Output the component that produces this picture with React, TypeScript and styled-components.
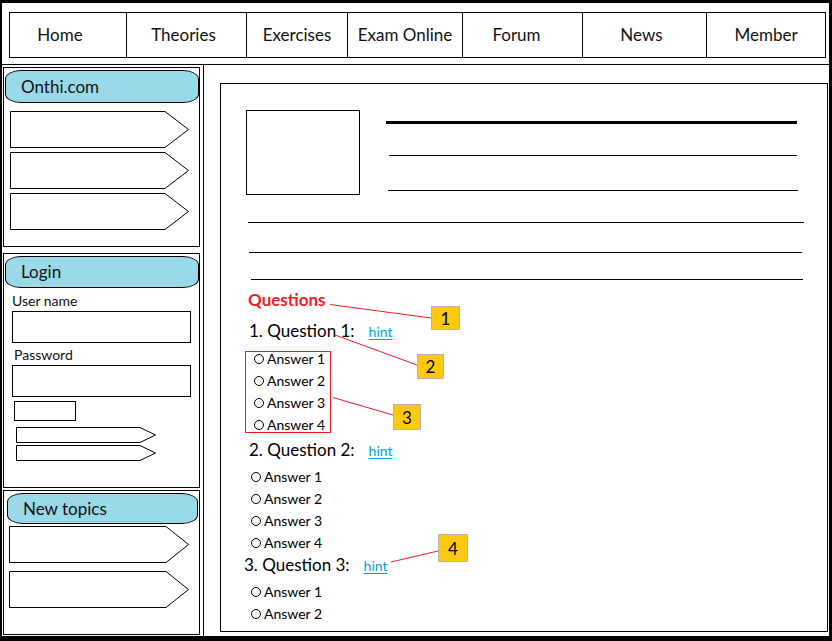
import React from "react";
import styled, { createGlobalStyle } from "styled-components";

const GlobalStyle = createGlobalStyle`
  * {
    box-sizing: border-box;
  }
  body {
    margin: 0;
    background: #fff;
    font-family: Lato, "Open Sans", sans-serif;
    color: #111;
  }
`;

const Frame = styled.div`
  position: relative;
  width: 832px;
  height: 641px;
  display: flex;
  flex-direction: column;
  background: #fff;
  border-style: solid;
  border-color: #000;
  border-width: 3px 3px 5px 2px;
`;

const Header = styled.header`
  height: 62px;
  padding: 9px 0 0 7px;
  border-bottom: 1px solid #000;
`;

const Nav = styled.nav`
  display: grid;
  grid-template-columns: 116px 120px 101px 115px 120px 124px 119px;
  width: 817px;
  height: 46px;
  border: 1px solid #000;
`;

const NavItem = styled.div<{ $offset?: number }>`
  display: flex;
  align-items: center;
  justify-content: center;
  padding-right: ${(p) => p.$offset || 0}px;
  padding-bottom: 2px;
  font-size: 17px;
  color: #111;
  & + & {
    border-left: 1px solid #000;
  }
`;

const Body = styled.div`
  flex: 1;
  min-height: 0;
  display: grid;
  grid-template-columns: 202px 1fr;
`;

const Sidebar = styled.aside`
  display: flex;
  flex-direction: column;
  padding: 2px 0 0 1px;
  border-right: 1px solid #000;
`;

const Panel = styled.section<{ $h: number; $mt?: number }>`
  display: flex;
  flex-direction: column;
  align-items: flex-start;
  width: 197px;
  height: ${(p) => p.$h}px;
  margin-top: ${(p) => p.$mt || 0}px;
  border: 1px solid #000;
`;

const Pill = styled.div<{ $w: number; $h: number; $ml?: number }>`
  width: ${(p) => p.$w}px;
  height: ${(p) => p.$h}px;
  margin: 2px 0 0 ${(p) => p.$ml || 0}px;
  padding-left: 15px;
  line-height: ${(p) => p.$h - 2}px;
  font-size: 17px;
  color: #111;
  background: #99d9ea;
  border: 1px solid #000;
  border-radius: 16px / 9px;
`;

const ArrowStack = styled.div<{ $mt: number; $ml: number; $gap: number }>`
  display: flex;
  flex-direction: column;
  gap: ${(p) => p.$gap}px;
  margin: ${(p) => p.$mt}px 0 0 ${(p) => p.$ml}px;
`;

const ArrowSvg = styled.svg`
  display: block;
`;

const Label = styled.label<{ $ml: number; $mt: number }>`
  display: block;
  margin: ${(p) => p.$mt}px 0 0 ${(p) => p.$ml}px;
  font-size: 14px;
  line-height: 16px;
  color: #111;
`;

const Field = styled.input<{ $w: number; $h: number; $ml: number; $mt: number }>`
  display: block;
  width: ${(p) => p.$w}px;
  height: ${(p) => p.$h}px;
  margin: ${(p) => p.$mt}px 0 0 ${(p) => p.$ml}px;
  padding: 0;
  border: 1px solid #000;
  border-radius: 0;
  background: #fff;
  outline: none;
  appearance: none;
`;

const Main = styled.main`
  display: flex;
  padding: 18px 1px 4px 16px;
`;

const ContentBox = styled.div`
  flex: 1;
  display: flex;
  flex-direction: column;
  border: 1px solid #000;
`;

const TopRow = styled.div`
  display: flex;
  margin: 26px 0 0 25px;
`;

const Thumb = styled.div`
  width: 114px;
  height: 85px;
  border: 1px solid #000;
`;

const HeadLines = styled.div`
  display: flex;
  flex-direction: column;
  align-items: flex-start;
  padding-top: 11px;
  margin-left: 26px;
`;

const Rule = styled.div<{ $w: number; $ml?: number; $mt?: number; $thick?: boolean }>`
  width: ${(p) => p.$w}px;
  height: ${(p) => (p.$thick ? 3 : 1)}px;
  margin: ${(p) => p.$mt || 0}px 0 0 ${(p) => p.$ml || 0}px;
  background: #000;
  flex-shrink: 0;
`;

const SectionTitle = styled.h2`
  margin: 10px 0 0 27px;
  font-size: 17px;
  line-height: 20px;
  font-weight: 700;
  color: #ed1c24;
`;

const QuestionTitle = styled.div<{ $ml: number; $mt: number }>`
  display: flex;
  align-items: baseline;
  gap: 14px;
  height: 24px;
  margin: ${(p) => p.$mt}px 0 0 ${(p) => p.$ml}px;
  font-size: 17px;
  line-height: 24px;
  color: #000;
`;

const Hint = styled.a`
  font-size: 14px;
  color: #00a2e8;
  text-decoration: underline;
  text-underline-offset: 2px;
`;

const AnswerList = styled.div<{ $ml: number; $boxed?: boolean }>`
  display: flex;
  flex-direction: column;
  align-self: flex-start;
  gap: 8px;
  margin: 8px 0 0 ${(p) => p.$ml}px;
  ${(p) =>
    p.$boxed &&
    `
    width: 86px;
    padding-left: 8px;
    border: 1px solid #ed1c24;
  `}
`;

const Answer = styled.div`
  display: flex;
  align-items: center;
  gap: 3px;
  height: 14px;
  font-size: 14px;
  line-height: 14px;
  color: #000;
  white-space: nowrap;
`;

const Radio = styled.span`
  width: 10px;
  height: 10px;
  border: 1px solid #000;
  border-radius: 50%;
  flex-shrink: 0;
`;

const Annotations = styled.div`
  position: absolute;
  top: -3px;
  left: -2px;
  width: 832px;
  height: 641px;
  pointer-events: none;
`;

const Leaders = styled.svg`
  position: absolute;
  top: 0;
  left: 0;
`;

const Badge = styled.div<{ $x: number; $y: number; $w: number; $h: number }>`
  position: absolute;
  left: ${(p) => p.$x}px;
  top: ${(p) => p.$y}px;
  width: ${(p) => p.$w}px;
  height: ${(p) => p.$h}px;
  display: flex;
  align-items: center;
  justify-content: center;
  font-size: 17px;
  color: #000;
  background: #ffc90e;
  border: 1px solid #b4b4b4;
`;

const Arrow = ({ w, h, tip }: { w: number; h: number; tip: number }) => (
  <ArrowSvg width={w} height={h} viewBox={`0 0 ${w} ${h}`}>
    <polygon
      points={`0.5,0.5 ${tip},0.5 ${w - 0.5},${h / 2} ${tip},${h - 0.5} 0.5,${h - 0.5}`}
      fill="#fff"
      stroke="#000"
      strokeWidth="1"
    />
  </ArrowSvg>
);

const navItems = [
  { label: "Home", offset: 16 },
  { label: "Theories", offset: 6 },
  { label: "Exercises" },
  { label: "Exam Online" },
  { label: "Forum", offset: 12 },
  { label: "News", offset: 6 },
  { label: "Member" },
];

const badges = [
  { n: 1, x: 431, y: 306, w: 29, h: 24 },
  { n: 2, x: 417, y: 354, w: 27, h: 25 },
  { n: 3, x: 393, y: 404, w: 28, h: 26 },
  { n: 4, x: 438, y: 534, w: 30, h: 28 },
];

const leaders = [
  [330, 304.5, 431, 318],
  [335, 335, 417, 365],
  [333, 397.5, 393, 415],
  [391, 562, 438, 551],
];

const App = () => {
  return (
    <>
      <GlobalStyle />
      <Frame>
        <Header>
          <Nav>
            {navItems.map((item) => (
              <NavItem key={item.label} $offset={item.offset}>
                {item.label}
              </NavItem>
            ))}
          </Nav>
        </Header>

        <Body>
          <Sidebar>
            <Panel $h={180}>
              <Pill $w={194} $h={33} $ml={1}>
                Onthi.com
              </Pill>
              <ArrowStack $mt={8} $ml={6} $gap={4}>
                <Arrow w={179} h={37} tip={155} />
                <Arrow w={179} h={37} tip={155} />
                <Arrow w={179} h={37} tip={155} />
              </ArrowStack>
            </Panel>

            <Panel $h={235} $mt={6}>
              <Pill $w={194} $h={32} $ml={1}>
                Login
              </Pill>
              <Label $ml={8} $mt={5}>
                User name
              </Label>
              <Field $w={179} $h={32} $ml={8} $mt={2} readOnly />
              <Label $ml={10} $mt={4}>
                Password
              </Label>
              <Field $w={179} $h={32} $ml={8} $mt={2} type="password" readOnly />
              <Field $w={62} $h={20} $ml={10} $mt={4} readOnly />
              <ArrowStack $mt={6} $ml={12} $gap={2}>
                <Arrow w={140} h={16} tip={124} />
                <Arrow w={140} h={16} tip={124} />
              </ArrowStack>
            </Panel>

            <Panel $h={145} $mt={2}>
              <Pill $w={191} $h={31} $ml={3}>
                New topics
              </Pill>
              <ArrowStack $mt={2} $ml={5} $gap={8}>
                <Arrow w={180} h={37} tip={157} />
                <Arrow w={180} h={37} tip={157} />
              </ArrowStack>
            </Panel>
          </Sidebar>

          <Main>
            <ContentBox>
              <TopRow>
                <Thumb />
                <HeadLines>
                  <Rule $w={411} $thick />
                  <Rule $w={408} $ml={3} $mt={31} />
                  <Rule $w={410} $ml={2} $mt={34} />
                </HeadLines>
              </TopRow>
              <Rule $w={556} $ml={27} $mt={27} />
              <Rule $w={553} $ml={28} $mt={29} />
              <Rule $w={552} $ml={30} $mt={26} />

              <SectionTitle>Questions</SectionTitle>

              <QuestionTitle $ml={28} $mt={9}>
                <span>1. Question 1:</span>
                <Hint>hint</Hint>
              </QuestionTitle>
              <AnswerList $ml={24} $boxed>
                {[1, 2, 3, 4].map((n) => (
                  <Answer key={n}>
                    <Radio />
                    Answer {n}
                  </Answer>
                ))}
              </AnswerList>

              <QuestionTitle $ml={28} $mt={5}>
                <span>2. Question 2:</span>
                <Hint>hint</Hint>
              </QuestionTitle>
              <AnswerList $ml={30}>
                {[1, 2, 3, 4].map((n) => (
                  <Answer key={n}>
                    <Radio />
                    Answer {n}
                  </Answer>
                ))}
              </AnswerList>

              <QuestionTitle $ml={23} $mt={3}>
                <span>3. Question 3:</span>
                <Hint>hint</Hint>
              </QuestionTitle>
              <AnswerList $ml={30}>
                {[1, 2].map((n) => (
                  <Answer key={n}>
                    <Radio />
                    Answer {n}
                  </Answer>
                ))}
              </AnswerList>
            </ContentBox>
          </Main>
        </Body>

        <Annotations>
          <Leaders width={832} height={641}>
            {leaders.map(([x1, y1, x2, y2], i) => (
              <line key={i} x1={x1} y1={y1} x2={x2} y2={y2} stroke="#ed1c24" strokeWidth="1" />
            ))}
          </Leaders>
          {badges.map((b) => (
            <Badge key={b.n} $x={b.x} $y={b.y} $w={b.w} $h={b.h}>
              {b.n}
            </Badge>
          ))}
        </Annotations>
      </Frame>
    </>
  );
};

export default App;
